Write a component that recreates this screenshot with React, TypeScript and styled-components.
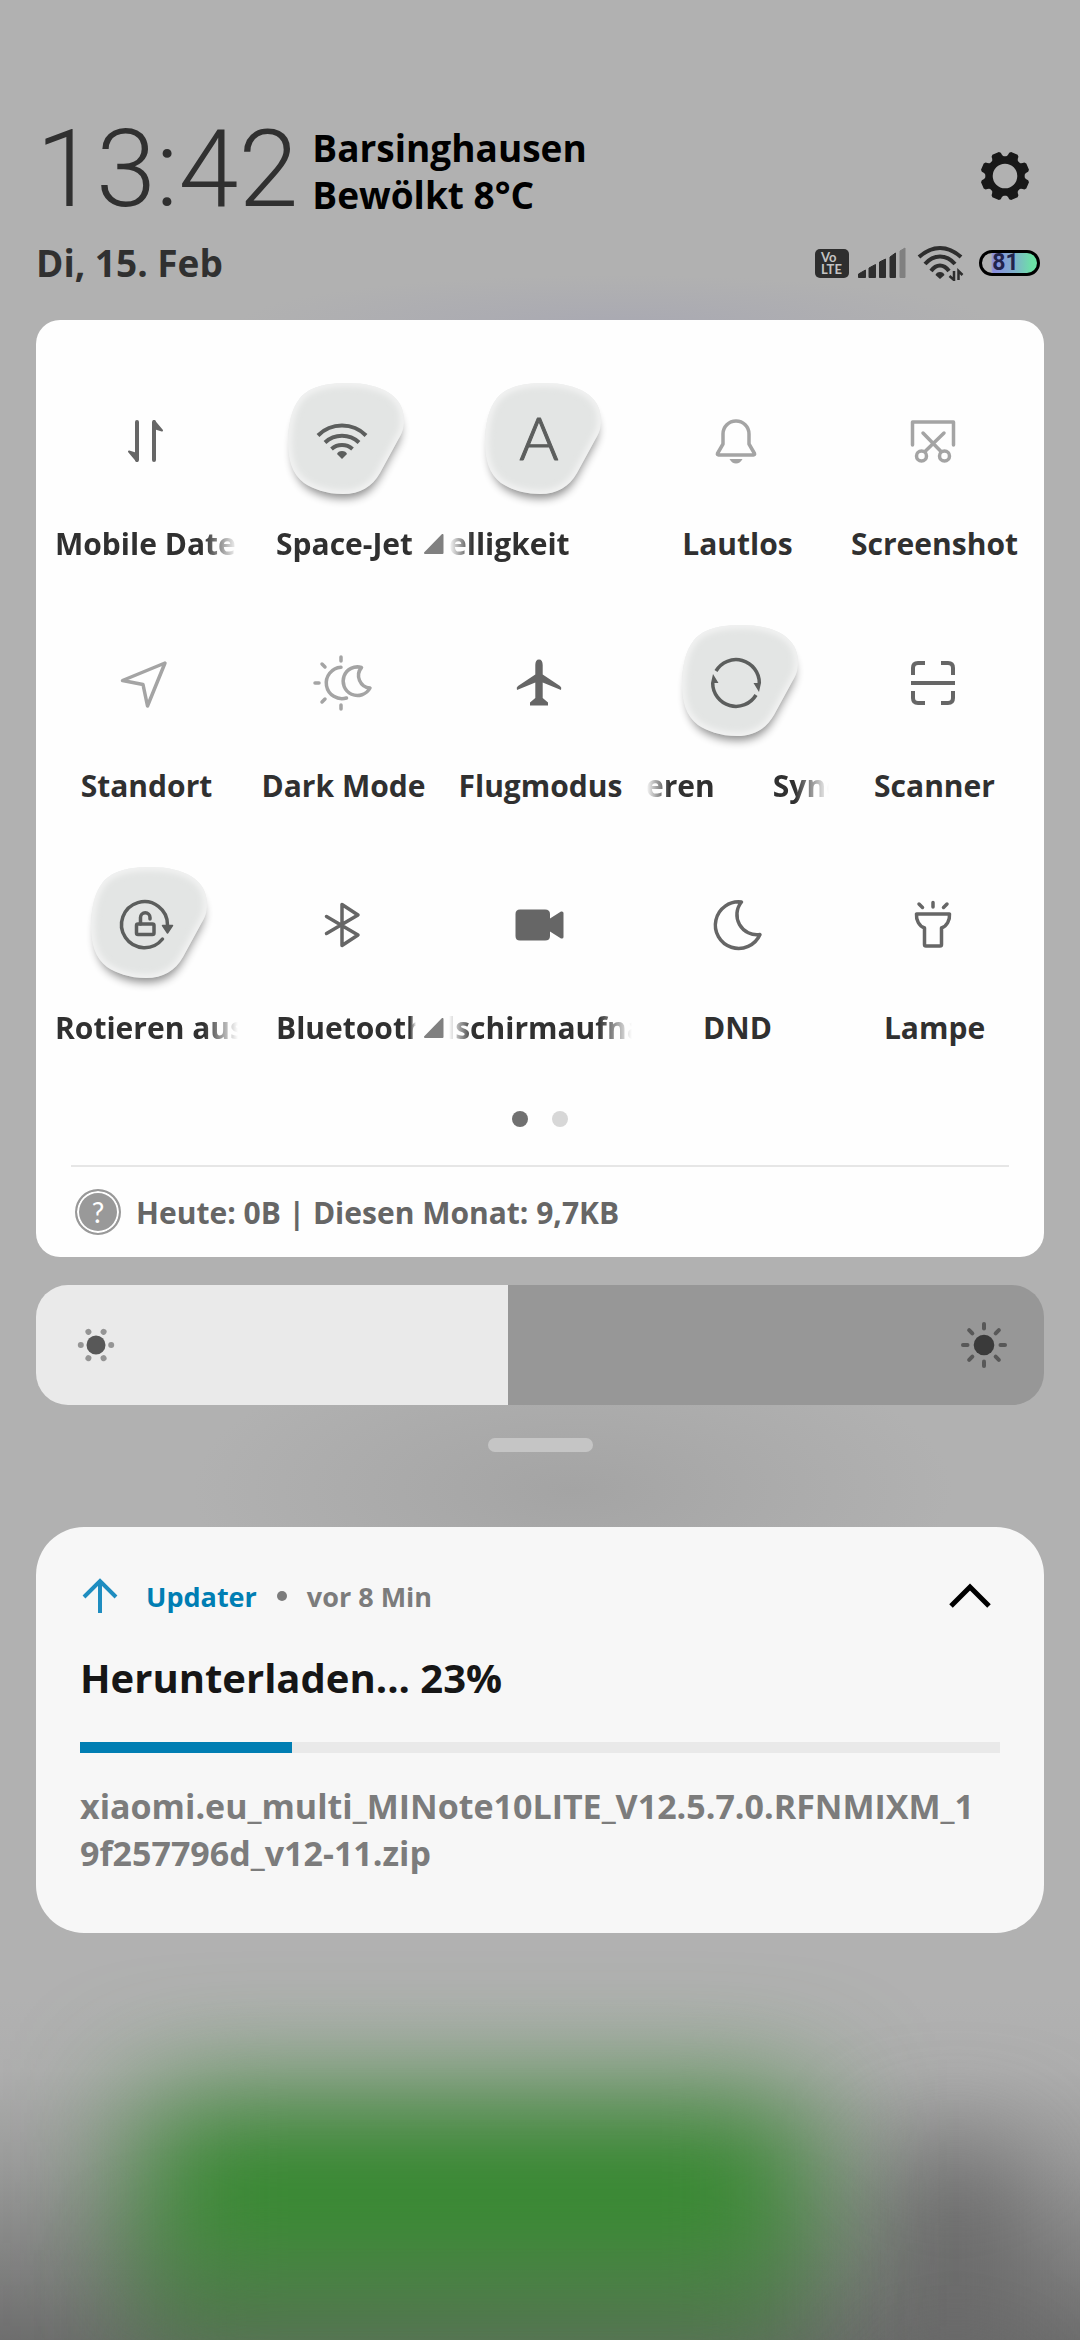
import React, { useState } from "react";
import styled, { createGlobalStyle } from "styled-components";

const GlobalStyle = createGlobalStyle`
  *, *::before, *::after { box-sizing: border-box; }
  body { margin: 0; background: #b1b1b1; }
  button { border: 0; padding: 0; margin: 0; background: none; font: inherit; color: inherit; cursor: pointer; }
`;

const Shade = styled.main`
  position: relative;
  isolation: isolate;
  overflow: hidden;
  min-height: 100vh;
  padding: 121px 36px 0;
  font-family: "Open Sans", "Noto Sans", sans-serif;
  font-weight: 700;
  color: #303030;
`;

const Wallpaper = styled.div`
  position: absolute;
  inset: 0;
  z-index: -1;
  overflow: hidden;
  background:
    radial-gradient(ellipse 380px 150px at 53% 1490px, #a4a4a4 0%, rgba(167, 167, 167, 0.7) 45%, rgba(177, 177, 177, 0) 100%),
    radial-gradient(ellipse 380px 50px at 57% 325px, #a9a9b2 0%, rgba(177, 177, 177, 0) 100%),
    linear-gradient(to top, #6e6e6e 0, #858585 90px, #9c9c9c 180px, #aeaeae 270px, #b1b1b1 340px);
`;

const Glow = styled.div<{ $left: string; $width: string; $top: number; $bottom: number; $color: string; $blur: number }>`
  position: absolute;
  left: ${(p) => p.$left};
  width: ${(p) => p.$width};
  height: ${(p) => p.$top - p.$bottom}px;
  bottom: ${(p) => p.$bottom}px;
  background: ${(p) => p.$color};
  filter: blur(${(p) => p.$blur}px);
`;

/* ---------- header ---------- */

const TopRow = styled.header`
  display: flex;
  align-items: flex-end;
`;

const Clock = styled.time`
  font-family: Roboto, sans-serif;
  font-weight: 300;
  font-size: 108px;
  line-height: 97px;
`;

const Weather = styled.div`
  margin-left: 14px;
  flex: 1;
  font-size: 37px;
  line-height: 47px;
  color: #000;
`;

const SettingsButton = styled.button`
  display: grid;
  place-items: center;
  width: 78px;
  height: 84px;
`;

const StatusRow = styled.div`
  display: flex;
  align-items: center;
  justify-content: space-between;
  margin-top: 21px;
  font-size: 37px;
  line-height: 48px;
`;

const StatusIcons = styled.div`
  display: flex;
  align-items: center;
  padding-right: 4px;
`;

const VoLte = styled.span`
  display: flex;
  flex-direction: column;
  justify-content: center;
  width: 34px;
  height: 29px;
  padding-left: 6px;
  border-radius: 5px;
  background: #2e2e2e;
  color: #c4c4c4;
  font: 700 13px/12px Lato, sans-serif;
`;

const SignalIcon = styled.svg`
  margin: 0 11px 0 9px;
`;

const Battery = styled.span`
  display: grid;
  place-items: center;
  width: 61px;
  height: 26px;
  margin-left: 14px;
  padding-right: 8px;
  border: 3px solid #000;
  border-radius: 13px;
  background: linear-gradient(to right, #b1b1b1 9px, #8a8ce0 11px, #7fb0cc 32px, #6ce2a6 50px);
  color: #22244c;
  font: 700 23px/20px Roboto, sans-serif;
`;

/* ---------- quick settings panel ---------- */

const Panel = styled.section`
  margin-top: 33px;
  padding-top: 51px;
  border-radius: 24px;
  background: #fefefe;
`;

const TileGrid = styled.div`
  display: grid;
  grid-template-columns: repeat(5, minmax(0, 1fr));
  row-gap: 48px;
  padding: 0 13px 0 10px;
`;

const Tile = styled.button<{ $tone: string }>`
  display: flex;
  flex-direction: column;
  align-items: center;
  gap: 12px;
  color: ${(p) => p.$tone};
`;

const TileArt = styled.svg`
  display: block;
  overflow: visible;
`;

const LabelRow = styled.span<{ $menu?: boolean }>`
  display: flex;
  align-items: center;
  justify-content: ${(p) => (p.$menu ? "flex-start" : "center")};
  width: 187px;
  padding-left: ${(p) => (p.$menu ? 28 : 4)}px;
  color: #303030;
  font-size: 30px;
  line-height: 42px;
`;

type Fade = "none" | "left" | "right" | "both" | "edge";

const fades: Record<Fade, string> = {
  none: "none",
  left: "linear-gradient(to right, transparent, #000 24px)",
  right: "linear-gradient(to left, transparent, #000 34px)",
  both: "linear-gradient(to right, transparent, #000 24px, #000 calc(100% - 34px), transparent)",
  edge: "linear-gradient(to left, transparent, #000 6px)",
};

const LabelText = styled.span<{ $fade: Fade; $align: string }>`
  display: flex;
  flex: ${(p) => (p.$fade === "none" ? "none" : p.$fade === "edge" ? "0 0 140px" : "1 1 0")};
  min-width: 0;
  gap: 58px;
  justify-content: ${(p) => p.$align};
  overflow: ${(p) => (p.$fade === "none" ? "visible" : "hidden")};
  white-space: nowrap;
  mask-image: ${(p) => fades[p.$fade]};
`;

const MenuMark = styled.svg`
  flex: none;
  margin-left: 8px;
`;

const Pager = styled.div`
  display: flex;
  justify-content: center;
  gap: 24px;
  margin-top: 62px;
`;

const PageDot = styled.span<{ $on?: boolean }>`
  width: 16px;
  height: 16px;
  border-radius: 50%;
  background: ${(p) => (p.$on ? "#707070" : "#d7d7d7")};
`;

const Usage = styled.footer`
  display: flex;
  align-items: center;
  gap: 15px;
  height: 92px;
  margin: 38px 35px 0;
  padding-left: 4px;
  border-top: 2px solid #e6e6e6;
  color: #666;
  font-size: 30px;
`;

const HelpBadge = styled.span`
  display: grid;
  place-items: center;
  width: 46px;
  height: 46px;
  border: 2px solid #999;
  border-radius: 50%;
  background: #999;
  box-shadow: inset 0 0 0 2px #fff;
  color: #fff;
  font: 400 28px/38px Lato, sans-serif;
`;

/* ---------- brightness ---------- */

const Brightness = styled.label`
  position: relative;
  display: block;
  height: 120px;
  margin-top: 28px;
`;

const BrightnessRange = styled.input<{ $fill: number }>`
  appearance: none;
  display: block;
  width: 100%;
  height: 100%;
  margin: 0;
  border-radius: 32px;
  background: linear-gradient(to right, #eaeaea ${(p) => p.$fill}%, #979797 ${(p) => p.$fill}%);
  &::-webkit-slider-thumb { appearance: none; width: 2px; height: 120px; background: transparent; }
`;

const RangeIcon = styled.svg<{ $side: "left" | "right" }>`
  position: absolute;
  top: 35px;
  ${(p) => p.$side}: 35px;
  pointer-events: none;
`;

const Handle = styled.div`
  width: 105px;
  height: 14px;
  margin: 33px auto 0;
  border-radius: 7px;
  background: #c5c5c5;
`;

/* ---------- notification ---------- */

const Card = styled.article`
  margin-top: 75px;
  padding: 44px 44px 56px;
  border-radius: 48px;
  background: #f7f7f7;
`;

const CardHead = styled.div`
  display: flex;
  align-items: center;
  height: 52px;
  padding-bottom: 2px;
  font-size: 27px;
  color: #7c7c7c;
`;

const AppName = styled.span`
  margin: 0 20px 0 25px;
  color: #007eb3;
`;

const Bullet = styled.span`
  width: 10px;
  height: 10px;
  margin-right: 20px;
  border-radius: 50%;
  background: #7c7c7c;
`;

const Collapse = styled.button`
  display: grid;
  place-items: center;
  width: 60px;
  height: 52px;
  margin-left: auto;
`;

const CardTitle = styled.h2`
  margin: 27px 0 36px;
  color: #161616;
  font-size: 40px;
  line-height: 56px;
  font-weight: 700;
`;

const Download = styled.progress`
  appearance: none;
  display: block;
  width: 100%;
  height: 11px;
  border: 0;
  background: #e9e9e9;
  &::-webkit-progress-bar { background: #e9e9e9; }
  &::-webkit-progress-value { background: #007eb3; }
`;

const FileName = styled.p`
  margin: 30px 0 0;
  color: #7c7c7c;
  font-size: 34px;
  line-height: 47px;
  overflow-wrap: anywhere;
`;

/* ---------- icons, one unit per pixel around the tile centre ---------- */

const BLOB =
  "M5-58C40-58 62-45 62-21C62-12 60-8 56-1L38 32C30 46 18 53 1 53C-16 53-29 48-38 42C-50 33-54 18-54 3C-54-15-51-32-42-43C-32-55-14-58 5-58Z";

const Blob = () => (
  <g>
    <defs>
      <filter id="blobShadow" x="-30%" y="-30%" width="160%" height="170%">
        <feGaussianBlur stdDeviation="5" />
      </filter>
      <filter id="blobRim" x="-20%" y="-20%" width="140%" height="140%">
        <feGaussianBlur stdDeviation="3" />
      </filter>
      <clipPath id="blobClip">
        <path d={BLOB} />
      </clipPath>
    </defs>
    <path d={BLOB} fill="#000" opacity=".45" filter="url(#blobShadow)" transform="translate(1 8) scale(.93)" />
    <path d={BLOB} fill="#e3e5e4" />
    <g clipPath="url(#blobClip)">
      <path d={BLOB} fill="none" stroke="#f6f6f6" strokeWidth="6" filter="url(#blobRim)" />
    </g>
  </g>
);

const icons: Record<string, React.ReactNode> = {
  data: (
    <g strokeWidth="4">
      <path d="M-8-19V19M9-19V19" />
      <path d="M-8 20L-16 10.500L-8 13ZM9-20L17-10.500L9-13Z" fill="currentColor" strokeWidth="2" />
    </g>
  ),
  wifi: (
    <g strokeWidth="4" strokeLinecap="butt">
      <path d="M-24-5.500A34 34 0 0 1 24-5.500M-17 1.500A25 25 0 0 1 17 1.500M-10.500 8A16 16 0 0 1 10.500 8" />
      <path d="M-5 13Q-4 10 0 10Q4 10 5 13L0 18Z" fill="currentColor" stroke="none" />
    </g>
  ),
  bell: (
    <g>
      <path d="M-13-7A13 13 0 0 1 13-7V3L18.500 12.500Q19 14 17.500 14H-17.500Q-19 14-18.500 12.500L-13 3Z" />
      <path d="M-6.500 18H6.500Q4 22.500 0 22.500Q-4 22.500-6.500 18Z" fill="currentColor" stroke="none" />
    </g>
  ),
  shot: (
    <g>
      <path d="M-20.500 4V-19H20.500V4M-10-8L8 10.500M11-8L-8 10.500" />
      <circle cx="-11.500" cy="15" r="5" />
      <circle cx="11.500" cy="15" r="5" />
    </g>
  ),
  place: <path d="M20-20L-22.500-2.500L-2 1.500L2.500 23Z" />,
  dark: (
    <g>
      <path d="M-1-15.700A15.700 15.700 0 1 0 4.500 15M19.500-15.500A14.300 14.300 0 1 0 28 5A12.500 12.500 0 0 1 19.500-15.500Z" />
      <path d="M-1-26V-22M-1 22V26M-27 0H-23M-20-19L-17-16M-17 16L-20 19" />
    </g>
  ),
  plane: (
    <path
      d="M0-23.500C2.500-23.500 3.700-21.500 3.700-18V-8.500L21 3Q23 4.500 22 7L3.700-.5V15L9 19.500V22.500H-9V19.500L-3.700 15V-.5L-22 7Q-23 4.500-21 3L-3.700-8.500V-18C-3.700-21.500-2.500-23.500 0-23.500Z"
      fill="currentColor"
      stroke="none"
    />
  ),
  sync: (
    <g strokeLinecap="butt">
      <path d="M-20-12A23.300 23.300 0 0 1 23.300 0M20 12A23.300 23.300 0 0 1-23.300 0" />
      <path d="M25 0H17.500L23 9ZM-25 0H-17.500L-23-9Z" fill="currentColor" stroke="none" />
    </g>
  ),
  scan: (
    <path
      strokeWidth="4"
      strokeLinecap="butt"
      d="M-20-8V-15Q-20-20-15-20H-8M8-20H15Q20-20 20-15V-8M20 8V15Q20 20 15 20H8M-8 20H-15Q-20 20-20 15V8M-22 0H22"
    />
  ),
  rotate: (
    <g>
      <path d="M17.500 14A23 23 0 1 1 22.500 0" />
      <path d="M17.500 .5H27.500L22.500 8Z" fill="currentColor" strokeWidth="1.500" />
      <rect x="-8.500" y="-1" width="17.500" height="10.500" rx="1.500" />
      <path d="M-4.500-1V-7.500A4.700 4.700 0 0 1 5-7.500V-6" />
    </g>
  ),
  bluetooth: <path d="M-15.500 8.500L16-10L0-20.500V20.500L16 10L-15.500-8.500" />,
  video: (
    <path
      d="M-19-15.500H6Q11-15.500 11-11V-6.500L22-13.500Q24.500-14 24.500-12V12Q24.500 14 22 13.500L11 6.500V11Q11 15.500 6 15.500H-19Q-23.500 15.500-23.500 11V-11Q-23.500-15.500-19-15.500Z"
      fill="currentColor"
      stroke="none"
    />
  ),
  moon: <path d="M5.500-23A23.300 23.300 0 1 0 24 9.500A20 20 0 0 1 5.500-23Z" />,
  lamp: (
    <path d="M-16.500-11H16.500C17-5 14 1 8.500 3V19.500Q8.500 21 7 21H-7Q-8.500 21-8.500 19.500V3C-14 1-17-5-16.500-11ZM0-22.500V-18M-14-21L-10.500-17.500M14-21L10.500-17.500" />
  ),
  auto: (
    <text
      y="19"
      textAnchor="middle"
      fontFamily="Lato, sans-serif"
      fontWeight="300"
      fontSize="60"
      fill="currentColor"
      strokeWidth="1"
    >
      A
    </text>
  ),
};

interface TileSpec {
  icon: string;
  label: string[];
  on?: boolean;
  dim?: boolean;
  menu?: boolean;
  fade?: Fade;
  align?: string;
}

const tiles: TileSpec[] = [
  { icon: "data", label: ["Mobile Daten"], fade: "right" },
  { icon: "wifi", label: ["Space-Jet"], on: true, menu: true, fade: "edge" },
  { icon: "auto", label: ["elligkeit"], on: true, fade: "left" },
  { icon: "bell", label: ["Lautlos"], dim: true },
  { icon: "shot", label: ["Screenshot"], dim: true },
  { icon: "place", label: ["Standort"], dim: true },
  { icon: "dark", label: ["Dark Mode"], dim: true },
  { icon: "plane", label: ["Flugmodus"] },
  { icon: "sync", label: ["eren", "Sync"], on: true, fade: "both" },
  { icon: "scan", label: ["Scanner"] },
  { icon: "rotate", label: ["Rotieren aus"], on: true, fade: "right" },
  { icon: "bluetooth", label: ["Bluetooth"], menu: true, fade: "edge" },
  { icon: "video", label: ["dschirmaufna"], fade: "both", align: "center" },
  { icon: "moon", label: ["DND"] },
  { icon: "lamp", label: ["Lampe"] },
];

const QuickTile = ({ icon, label, on, dim, menu, fade = "none", align = "flex-start" }: TileSpec) => (
  <Tile type="button" aria-pressed={!!on} $tone={dim ? "#a4a4a4" : on ? "#5c5e5d" : "#666"}>
    <TileArt width="140" height="140" viewBox="-70 -70 140 140" aria-hidden="true">
      {on && <Blob />}
      <g fill="none" stroke="currentColor" strokeWidth="3.5" strokeLinecap="round" strokeLinejoin="round">
        {icons[icon]}
      </g>
    </TileArt>
    <LabelRow $menu={menu}>
      <LabelText $fade={fade} $align={align}>
        {label.map((part) => (
          <span key={part}>{part}</span>
        ))}
      </LabelText>
      {menu && (
        <MenuMark width="20" height="20" viewBox="0 0 20 20" aria-hidden="true">
          <path d="M18.500 1V19H1Z" fill="#808080" stroke="#808080" strokeWidth="2" strokeLinejoin="round" />
        </MenuMark>
      )}
    </LabelRow>
  </Tile>
);

const eighths = [0, 45, 90, 135, 180, 225, 270, 315];
const sixths = [0, 60, 120, 180, 240, 300];

export default function App() {
  const [level, setLevel] = useState(468);

  return (
    <>
      <GlobalStyle />
      <Shade>
        <Wallpaper>
          <Glow $left="83%" $width="11%" $top={190} $bottom={-40} $color="#666" $blur={55} />
          <Glow $left="13%" $width="61%" $top={90} $bottom={-30} $color="rgba(78, 116, 74, 0.7)" $blur={45} />
          <Glow $left="13%" $width="62%" $top={240} $bottom={55} $color="#31882a" $blur={62} />
        </Wallpaper>

        <TopRow>
          <Clock>13:42</Clock>
          <Weather>
            <div>Barsinghausen</div>
            <div>Bewölkt 8°C</div>
          </Weather>
          <SettingsButton type="button" aria-label="Einstellungen">
            <svg width="50" height="50" viewBox="-25 -25 50 50">
              <circle r="16" fill="none" stroke="#181818" strokeWidth="7.400" />
              {eighths.map((a) => (
                <path
                  key={a}
                  d="M-8.500-16.500C-6-18-5-20-5-23L-3.500-24.500H3.500L5-23C5-20 6-18 8.500-16.500Z"
                  fill="#181818"
                  transform={`rotate(${a + 22.5})`}
                />
              ))}
            </svg>
          </SettingsButton>
        </TopRow>

        <StatusRow>
          <span>Di, 15. Feb</span>
          <StatusIcons>
            <VoLte>
              <span>Vo</span>
              <span>LTE</span>
            </VoLte>
            <SignalIcon width="48" height="32" viewBox="0 0 48 32" aria-hidden="true">
              <g fill="#2e2e2e" stroke="#2e2e2e" strokeWidth="1" strokeLinejoin="round">
                <path d="M.5 27L7.500 23V30.500H.5ZM11 21L17.500 17.500V30.500H11ZM21.500 15L27.500 12V30.500H21.500ZM32 10L37.500 6V30.500H32Z" />
                <path d="M42 4L47 1V30.500H42Z" fill="#808080" stroke="#808080" />
              </g>
            </SignalIcon>
            <svg width="48" height="36" viewBox="0 0 48 36" aria-hidden="true">
              <g fill="none" stroke="#2e2e2e" strokeWidth="4">
                <path d="M2 12Q12 3 23 3Q34 3 44 12M8 19Q14.500 11.500 23 11.500Q31.500 11.500 38 19M14 26Q18 20.500 23 20.500Q28 20.500 32 26" />
                <path d="M18.500 30Q19.500 27 23 27Q26.500 27 27.500 30L23 34Z" fill="#2e2e2e" stroke="none" />
                <path d="M37 26V35L32.500 31M41.500 35V26L45.500 30" strokeWidth="2.500" />
              </g>
            </svg>
            <Battery>81</Battery>
          </StatusIcons>
        </StatusRow>

        <Panel>
          <TileGrid>
            {tiles.map((t) => (
              <QuickTile key={t.icon} {...t} />
            ))}
          </TileGrid>
          <Pager>
            <PageDot $on />
            <PageDot />
          </Pager>
          <Usage>
            <HelpBadge>?</HelpBadge>
            <span>Heute: 0B | Diesen Monat: 9,7KB</span>
          </Usage>
        </Panel>

        <Brightness>
          <BrightnessRange
            type="range"
            aria-label="Helligkeit"
            min={0}
            max={1000}
            value={level}
            $fill={level / 10}
            onChange={(e) => setLevel(Number(e.target.value))}
          />
          <RangeIcon $side="left" width="50" height="50" viewBox="-25 -25 50 50">
            <circle r="9.500" fill="#585858" />
            {sixths.map((a) => (
              <circle key={a} cx="15.200" r="3" fill="#959595" transform={`rotate(${a})`} />
            ))}
          </RangeIcon>
          <RangeIcon $side="right" width="50" height="50" viewBox="-25 -25 50 50">
            <circle r="10.300" fill="#3a3a3a" />
            {eighths.map((a) => (
              <path
                key={a}
                d="M16.500 0H21"
                stroke="#585858"
                strokeWidth="4"
                strokeLinecap="round"
                transform={`rotate(${a})`}
              />
            ))}
          </RangeIcon>
        </Brightness>

        <Handle />

        <Card>
          <CardHead>
            <svg width="41" height="40" viewBox="0 0 41 40" aria-hidden="true">
              <path d="M20 37V5M4 21L20 5L36 21" fill="none" stroke="#1f8dc0" strokeWidth="4" />
            </svg>
            <AppName>Updater</AppName>
            <Bullet />
            <span>vor 8 Min</span>
            <Collapse type="button" aria-label="Einklappen">
              <svg width="44" height="26" viewBox="0 0 44 26">
                <path d="M3 23L22 4L41 23" fill="none" stroke="#000" strokeWidth="5" />
              </svg>
            </Collapse>
          </CardHead>
          <CardTitle>Herunterladen... 23%</CardTitle>
          <Download value={23} max={100} aria-label="Herunterladen" />
          <FileName>
            xiaomi.eu_multi_MINote10LITE_V12.5.7.0.RFNMIXM_1
            <br />
            9f257796d_v12-11.zip
          </FileName>
        </Card>
      </Shade>
    </>
  );
}
